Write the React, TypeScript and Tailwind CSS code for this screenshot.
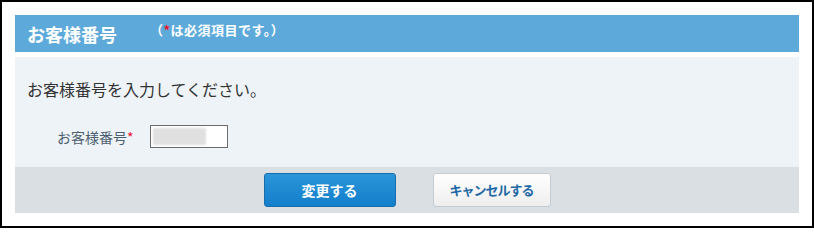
export default function App() {
  const font = { fontFamily: 'Meiryo, "Noto Sans CJK JP", "Noto Sans", sans-serif' };
  return (
    <div
      className="w-[814px] h-[228px] border-2 border-black bg-white p-[13px] flex flex-col"
      style={font}
    >
      {/* Header */}
      <div className="h-[37px] bg-[#5daada] flex items-center pl-3 shrink-0">
        <h1 className="text-[18px] leading-none font-bold text-white">お客様番号</h1>
        <span className="ml-[33px] mb-[9px] text-[13px] tracking-[0.5px] leading-none font-bold text-white">
          （<span className="text-[#e8162e]">*</span>は必須項目です。）
        </span>
      </div>

      {/* Content */}
      <div className="mt-[5px] h-[110px] bg-[#eef3f7] pl-3 pt-[21px] shrink-0">
        <p className="text-[16px] leading-[22px] text-[#333]">お客様番号を入力してください。</p>
        <div className="mt-[25px] flex items-center pl-[30px]">
          <label className="text-[14px] leading-none text-[#4d5f72]">
            お客様番号<span className="text-[#e8162e]">*</span>
          </label>
          <div className="ml-[16px] w-[78px] h-[23px] border border-[#6b6b6b] bg-white p-[2px]">
            <div className="w-[53px] h-[17px] bg-[#e0e0e0] blur-[1px]" />
          </div>
        </div>
      </div>

      {/* Footer */}
      <div className="h-[46px] bg-[#dadfe3] flex items-center justify-center gap-[37px] shrink-0">
        <button
          type="button"
          className="w-[132px] h-[34px] rounded-[3px] border border-[#1a6dab] bg-gradient-to-b from-[#2b95d8] to-[#127fcc] text-[14px] font-bold text-white"
        >
          変更する
        </button>
        <button
          type="button"
          className="w-[118px] h-[34px] rounded-[3px] border border-[#c5cbd0] bg-gradient-to-b from-white to-[#eeeeee] text-[13px] tracking-[-1px] font-bold text-[#1f68a6]"
        >
          キャンセルする
        </button>
      </div>
    </div>
  );
}
